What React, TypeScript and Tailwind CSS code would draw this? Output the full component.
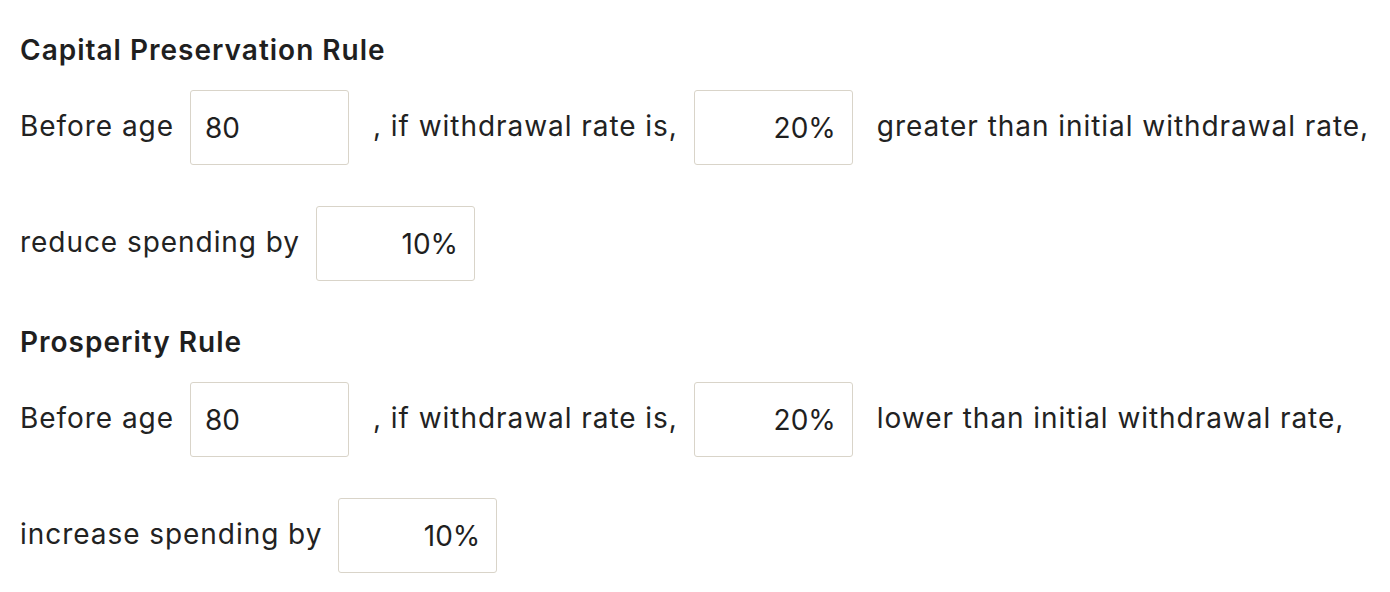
import React, { useState } from 'react';

type Field = { value: string; align: 'left' | 'right' };

function NumberBox({ value, align, onChange }: Field & { onChange: (v: string) => void }) {
  return (
    <input
      type="text"
      value={value}
      onChange={(e) => onChange(e.target.value)}
      className={`w-[159px] h-[75px] shrink-0 ml-4 mr-6 px-[14px] border-[1.5px] border-[#d9d4c9] rounded-[3px] bg-white text-[28px] tracking-normal text-[#1f1f1f] focus:outline-none ${align === 'right' ? 'text-right pr-4' : 'text-left'}`}
    />
  );
}

function RuleBlock({ title, direction, verb }: { title: string; direction: string; verb: string }) {
  const [age, setAge] = useState('80');
  const [rate, setRate] = useState('20%');
  const [change, setChange] = useState('10%');

  return (
    <section>
      <h2 className="h-10 flex items-center text-[28px] font-semibold text-[#1f1f1f] tracking-[1px]">{title}</h2>
      <div className="mt-5 flex items-center h-[75px] whitespace-nowrap">
        <span className="-mt-1">Before age</span>
        <NumberBox value={age} align="left" onChange={setAge} />
        <span className="-mt-1">, if withdrawal rate is,</span>
        <NumberBox value={rate} align="right" onChange={setRate} />
        <span className="-mt-1">{direction} than initial withdrawal rate,</span>
      </div>
      <div className="mt-[41px] flex items-center h-[75px] whitespace-nowrap">
        <span className="-mt-1">{verb} spending by</span>
        <NumberBox value={change} align="right" onChange={setChange} />
      </div>
    </section>
  );
}

export default function App() {
  return (
    <div
      className="w-[1390px] h-[592px] bg-white px-5 pt-[30px] text-[28px] tracking-[0.95px] text-[#222] flex flex-col gap-[41px]"
      style={{ fontFamily: 'Inter, "Open Sans", sans-serif' }}
    >
      <RuleBlock title="Capital Preservation Rule" direction="greater" verb="reduce" />
      <RuleBlock title="Prosperity Rule" direction="lower" verb="increase" />
    </div>
  );
}
